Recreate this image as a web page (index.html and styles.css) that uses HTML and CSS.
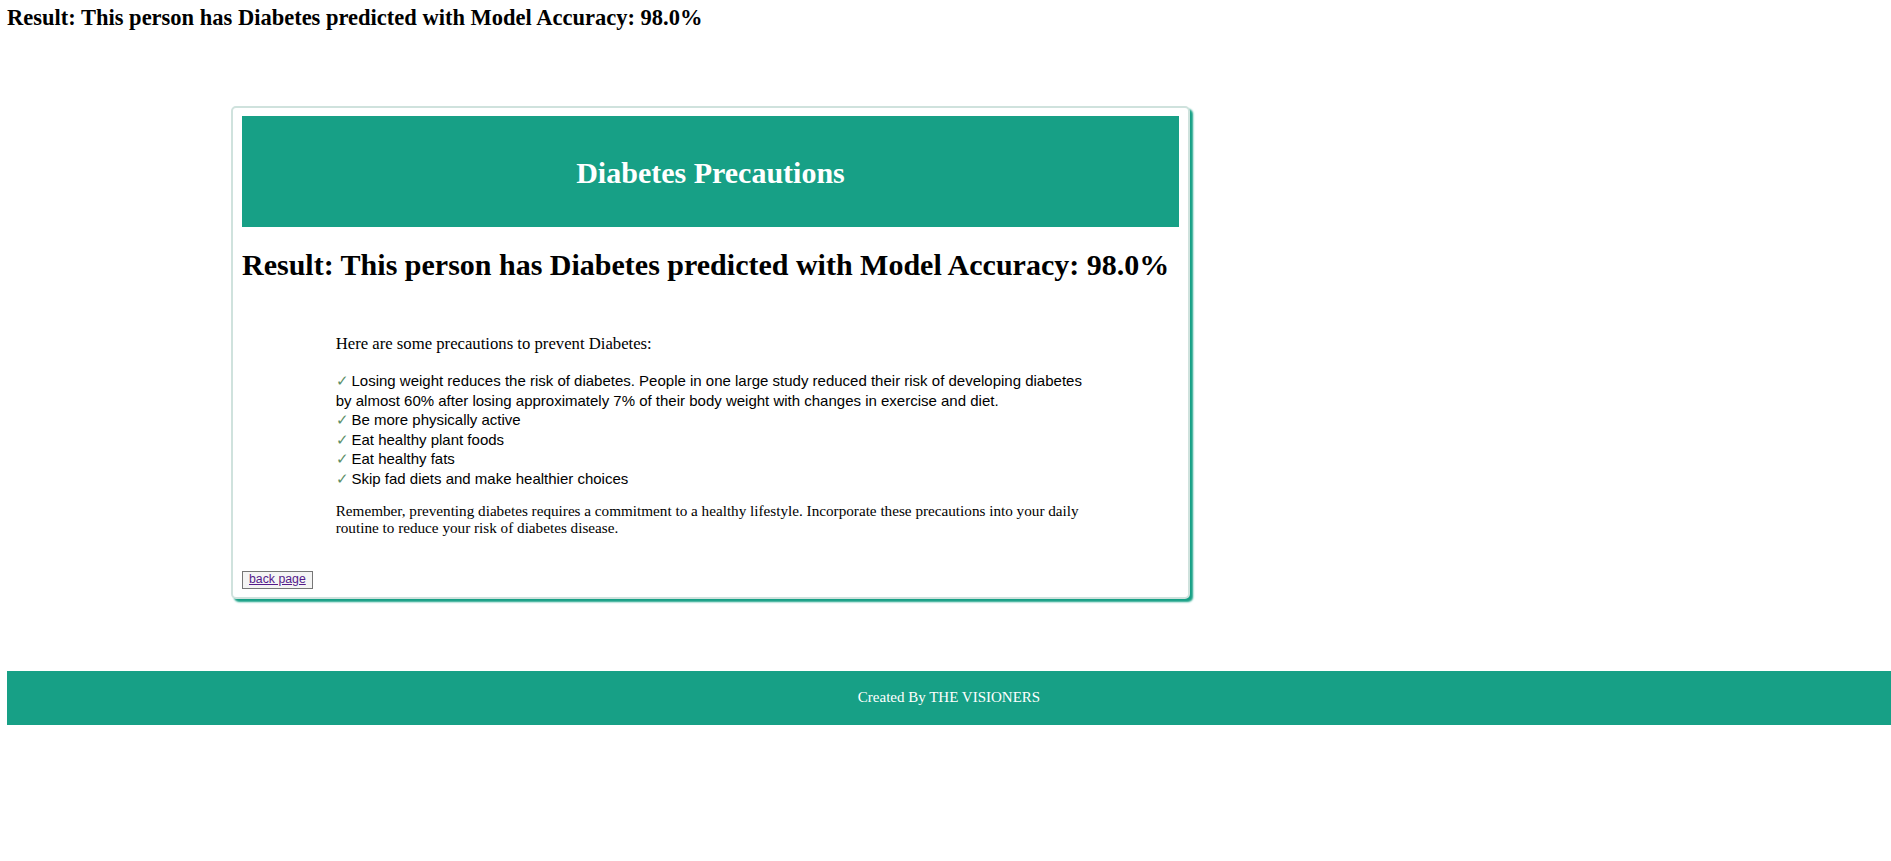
FILE: index.html
```html
<!DOCTYPE html>
<html lang="en">
<head>
<meta charset="utf-8">
<title>Diabetes Result</title>
<link rel="stylesheet" href="styles.css">
</head>
<body>
<h2 class="top-result">Result: This person has Diabetes predicted with Model Accuracy: 98.0%</h2>

<div class="card">
  <div class="card-header">
    <h2 class="card-title">Diabetes Precautions</h2>
  </div>
  <h1 class="card-result">Result: This person has Diabetes predicted with Model Accuracy: 98.0%</h1>
  <div class="content">
    <p class="intro">Here are some precautions to prevent Diabetes:</p>
    <div class="checklist">
      <div class="item"><span class="tick">&#10003;</span>Losing weight reduces the risk of diabetes. People in one large study reduced their risk of developing diabetes by almost 60% after losing approximately 7% of their body weight with changes in exercise and diet.</div>
      <div class="item"><span class="tick">&#10003;</span>Be more physically active</div>
      <div class="item"><span class="tick">&#10003;</span>Eat healthy plant foods</div>
      <div class="item"><span class="tick">&#10003;</span>Eat healthy fats</div>
      <div class="item"><span class="tick">&#10003;</span>Skip fad diets and make healthier choices</div>
    </div>
    <p class="outro">Remember, preventing diabetes requires a commitment to a healthy lifestyle. Incorporate these precautions into your daily routine to reduce your risk of diabetes disease.</p>
  </div>
  <button class="back-btn" type="button"><a href="#">back page</a></button>
</div>

<footer class="footer">Created By THE VISIONERS</footer>
</body>
</html>
```

FILE: styles.css
```css
html, body {
  margin: 0;
  padding: 0;
  background: #ffffff;
}

body {
  font-family: "Liberation Serif", "Times New Roman", serif;
  color: #000;
}

.top-result {
  margin: 0;
  padding: 6px 7px 0;
  font-size: 22.5px;
  line-height: 24px;
  font-weight: bold;
}

.card {
  box-sizing: border-box;
  width: 959px;
  margin: 76px 0 0 231px;
  padding: 8px 9px 8px;
  border: 2px solid #cfe2dd;
  border-radius: 5px;
  box-shadow: 3px 3px 2px #16a085;
  background: #fff;
}

.card-header {
  box-sizing: border-box;
  height: 111px;
  padding-top: 3px;
  background: #17a086;
  display: flex;
  align-items: center;
  justify-content: center;
}

.card-title {
  margin: 0;
  color: #fff;
  font-size: 30px;
  line-height: 34px;
  font-weight: bold;
}

.card-result {
  margin: 21px 0 0;
  font-size: 30px;
  line-height: 34px;
  font-weight: bold;
}

.content {
  width: 80%;
  margin: 0 auto;
}

.intro {
  margin: 53px 0 0;
  font-size: 16.7px;
  line-height: 17px;
}

.checklist {
  margin-top: 19px;
  font-family: "Liberation Sans", Arial, sans-serif;
  font-size: 15px;
  line-height: 19.6px;
}

.tick {
  display: inline-block;
  width: 1.05em;
  color: #5b8f68;
}

.outro {
  margin: 13px 0 0;
  font-size: 15.2px;
  line-height: 17.5px;
}

.back-btn {
  display: block;
  margin-top: 34px;
  padding: 0 6px;
  height: 18px;
  border: 1px solid #767676;
  border-radius: 0;
  background: #f4f4f4;
  font-family: "Liberation Sans", Arial, sans-serif;
  font-size: 12.3px;
  line-height: 15px;
}

.back-btn a {
  color: #551a8b;
  text-decoration: underline;
}

.footer {
  margin: 72px 0 0 7px;
  height: 54px;
  background: #17a086;
  color: #fff;
  font-size: 15px;
  display: flex;
  align-items: center;
  justify-content: center;
}
```
